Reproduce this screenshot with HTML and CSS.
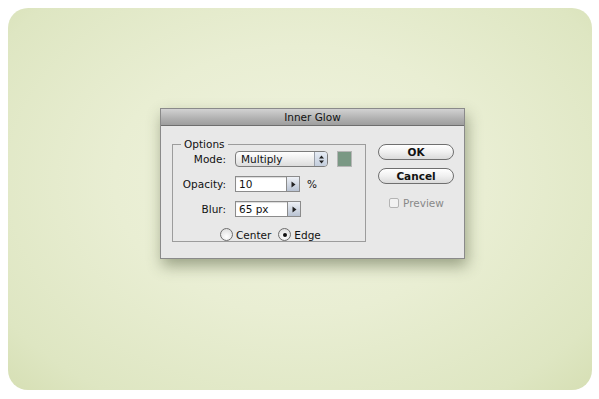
FILE: index.html
```html
<!DOCTYPE html>
<html lang="en">
<head>
  <meta charset="UTF-8">
  <meta name="viewport" content="width=device-width, initial-scale=1.0">
  <title>Inner Glow</title>
  <link rel="stylesheet" href="styles.css">
</head>
<body>
  <div class="canvas">
    <div class="dialog">
      <div class="titlebar">Inner Glow</div>
      <div class="dialog-body">
        <fieldset class="options">
          <legend>Options</legend>
          <div class="row">
            <span class="label">Mode:</span>
            <div class="select">
              <span class="select-text">Multiply</span>
              <span class="select-arrows">
                <svg width="7" height="9" viewBox="0 0 7 9"><path d="M3.5 0.5 L6 3.5 H1 Z M3.5 8.5 L6 5.5 H1 Z" fill="#222"/></svg>
              </span>
            </div>
            <span class="swatch"></span>
          </div>
          <div class="row">
            <span class="label">Opacity:</span>
            <div class="field">
              <span class="field-text">10</span>
              <span class="field-btn">
                <svg width="5" height="7" viewBox="0 0 5 7"><path d="M0.5 0.5 L4.5 3.5 L0.5 6.5 Z" fill="#222"/></svg>
              </span>
            </div>
            <span class="unit">%</span>
          </div>
          <div class="row">
            <span class="label">Blur:</span>
            <div class="field field-blur">
              <span class="field-text">65 px</span>
              <span class="field-btn">
                <svg width="5" height="7" viewBox="0 0 5 7"><path d="M0.5 0.5 L4.5 3.5 L0.5 6.5 Z" fill="#222"/></svg>
              </span>
            </div>
          </div>
          <div class="radios">
            <label class="radio"><span class="dot"></span>Center</label>
            <label class="radio"><span class="dot on"></span>Edge</label>
          </div>
        </fieldset>
        <div class="side">
          <button class="btn">OK</button>
          <button class="btn">Cancel</button>
          <label class="check"><span class="box"></span>Preview</label>
        </div>
      </div>
    </div>
  </div>
</body>
</html>
```

FILE: styles.css
```css
body {
  margin: 0;
  background: #fff;
  font-family: "DejaVu Sans", Verdana, sans-serif;
  font-size: 10px;
  color: #111;
}

.canvas {
  margin: 8px;
  height: 382px;
  width: 584px;
  box-sizing: border-box;
  border-radius: 20px;
  background: radial-gradient(ellipse at 50% 45%, #f0f3df 0%, #e9eed3 45%, #dee6c2 85%, #d6dfb4 100%);
  padding: 100px 0 0 152px;
}

.dialog {
  width: 305px;
  height: 151px;
  background: #e8e8e8;
  border: 1px solid #8a8a8a;
  box-sizing: border-box;
  box-shadow: 2px 7px 14px rgba(60, 70, 40, 0.45);
}

.titlebar {
  height: 16px;
  line-height: 16px;
  text-align: center;
  background: linear-gradient(#d2d2d2, #b0b0b0 60%, #9e9e9e);
  border-bottom: 1px solid #6e6e6e;
  font-size: 10.5px;
  color: #111;
}

.dialog-body {
  display: flex;
  padding: 13px 0 0 11px;
}

.options {
  margin: 0;
  width: 194px;
  height: 103px;
  box-sizing: border-box;
  border: 1px solid #9c9c9c;
  padding: 1px 0 0 0;
}

.options legend {
  padding: 0 3px;
  margin-left: 8px;
  line-height: 11px;
  font-size: 10.5px;
}

.row {
  display: flex;
  align-items: center;
  height: 16px;
  margin-bottom: 9px;
}

.row + .row + .row {
  margin-bottom: 11px;
}

.label {
  width: 53px;
  text-align: right;
  margin-right: 9px;
  font-size: 10.5px;
}

.select {
  display: flex;
  width: 93px;
  height: 16px;
  box-sizing: border-box;
  border: 1px solid #7c7c7c;
  border-radius: 4px;
  background: linear-gradient(#ffffff, #eeeeee 50%, #dcdcdc);
  overflow: hidden;
}

.select-text {
  flex: 1;
  padding-left: 5px;
  line-height: 14px;
  font-size: 10.5px;
}

.select-arrows {
  width: 12px;
  border-left: 1px solid #9aa0aa;
  background: linear-gradient(#e6ecf5, #c3cddc);
  display: flex;
  align-items: center;
  justify-content: center;
}

.swatch {
  width: 15px;
  height: 16px;
  margin-left: 9px;
  box-sizing: border-box;
  background: #7a9884;
  border: 1px solid #b6b6b6;
}

.field {
  display: flex;
  width: 65px;
  height: 16px;
  box-sizing: border-box;
  border: 1px solid #8b8b8b;
  background: #fff;
  box-shadow: inset 0 1px 1px rgba(0, 0, 0, 0.15);
}

.field-blur {
  width: 66px;
}

.field-text {
  flex: 1;
  padding-left: 3px;
  line-height: 14px;
  font-size: 10.5px;
}

.field-btn {
  width: 12px;
  border-left: 1px solid #8b8b8b;
  background: linear-gradient(#eef1f6, #b9c3d3);
  display: flex;
  align-items: center;
  justify-content: center;
}

.unit {
  margin-left: 7px;
  font-size: 10.5px;
}

.radios {
  display: flex;
  gap: 7px;
  padding-left: 47px;
}

.radio {
  display: flex;
  align-items: center;
  gap: 3px;
  font-size: 10.5px;
}

.dot {
  width: 13px;
  height: 13px;
  box-sizing: border-box;
  border-radius: 50%;
  border: 1px solid #6e6e6e;
  background: radial-gradient(circle at 50% 70%, #ffffff, #d8d8d8);
  display: flex;
  align-items: center;
  justify-content: center;
}

.dot.on::after {
  content: "";
  width: 4px;
  height: 4px;
  border-radius: 50%;
  background: #111;
}

.side {
  display: flex;
  flex-direction: column;
  align-items: flex-start;
  padding: 5px 0 0 12px;
}

.btn {
  width: 76px;
  height: 16px;
  margin: 0 0 8px 0;
  padding: 0;
  border: 1px solid #6f6f6f;
  border-radius: 8px;
  background: linear-gradient(#ffffff, #f0f0f0 50%, #dadada);
  font-family: "DejaVu Sans", Verdana, sans-serif;
  font-size: 10.5px;
  font-weight: bold;
  color: #111;
  line-height: 14px;
}

.check {
  display: flex;
  align-items: center;
  gap: 4px;
  margin: 5px 0 0 11px;
  color: #888;
  font-size: 10.5px;
}

.box {
  width: 10px;
  height: 10px;
  box-sizing: border-box;
  border: 1px solid #b4b4b4;
  border-radius: 2px;
  background: #f2f2f2;
}
```
